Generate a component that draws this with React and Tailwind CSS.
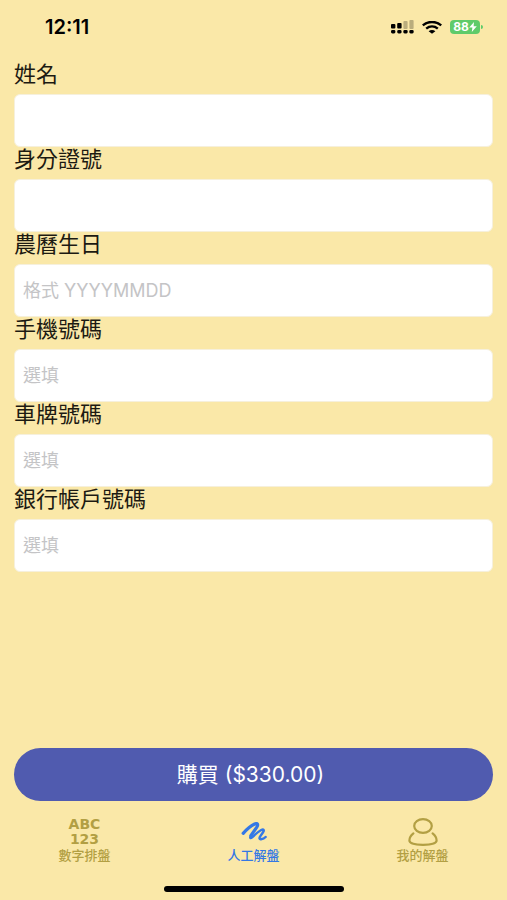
import { useState } from "react";

const FIELDS = [
  { key: "name", label: "姓名", placeholder: "" },
  { key: "idNumber", label: "身分證號", placeholder: "" },
  { key: "birthday", label: "農曆生日", placeholder: "格式 YYYYMMDD" },
  { key: "phone", label: "手機號碼", placeholder: "選填" },
  { key: "plate", label: "車牌號碼", placeholder: "選填" },
  { key: "bank", label: "銀行帳戶號碼", placeholder: "選填" },
];

const TABS = [
  { key: "numbers", label: "數字排盤", icon: NumbersIcon },
  { key: "manual", label: "人工解盤", icon: ScribbleIcon },
  { key: "mine", label: "我的解盤", icon: PersonIcon },
];

function NumbersIcon() {
  return (
    <span className="flex flex-col items-center font-['DejaVu_Sans',sans-serif] text-sm leading-[15px] font-bold">
      <span>ABC</span>
      <span>123</span>
    </span>
  );
}

function ScribbleIcon() {
  return (
    <svg width="26" height="20" viewBox="0 0 26 20" fill="none" stroke="currentColor" strokeLinecap="round" strokeLinejoin="round">
      <path d="M2.2 11.4C5.6 7.4 9.8 3.8 13.6 2C16.4 0.8 17.4 2.4 16 4.8L10 13.4" strokeWidth="3.2" />
      <path d="M10 13.4C8.4 16 9.4 16.8 11.4 15C14 12.6 17.4 9.6 20.2 8C22.6 6.8 23.4 8 22.2 10L19.2 14.4C18 16.4 18.4 17.4 20 17.2C21.8 17 23.4 16.4 24.6 15" strokeWidth="2.4" />
    </svg>
  );
}

function PersonIcon() {
  return (
    <svg width="30" height="28" viewBox="0 0 30 28" fill="none" stroke="currentColor" strokeWidth="2.2" strokeLinecap="round">
      <ellipse cx="15" cy="8" rx="8.8" ry="6.8" />
      <path d="M5.4 15.4C2.8 17.4 1.4 20.2 1.4 22.6C1.4 25.6 5.6 26.8 15 26.8C24.4 26.8 28.6 25.6 28.6 22.6C28.6 20.2 27.2 17.4 24.6 15.4" />
    </svg>
  );
}

function StatusBar() {
  return (
    <header className="flex h-[54px] items-center justify-between pr-6 pl-[45px] text-black">
      <span className="text-xl font-semibold">12:11</span>
      <div className="flex items-center gap-2">
        <svg width="23" height="14" viewBox="0 0 23 14" fill="currentColor">
          <rect x="0" y="4" width="4.4" height="4.6" rx="1" />
          <rect x="6.2" y="3" width="4.4" height="5.6" rx="1" />
          <g opacity="0.25">
            <rect x="12.4" y="1" width="4.2" height="8" rx="1" />
            <rect x="18.4" y="0" width="4.2" height="9" rx="1" />
          </g>
          <rect x="0" y="10" width="4.4" height="3.4" rx="1.4" />
          <rect x="6.2" y="10" width="4.4" height="3.4" rx="1.4" />
          <rect x="12.3" y="10" width="4.4" height="3.4" rx="1.4" />
          <rect x="18.3" y="10" width="4.4" height="3.4" rx="1.4" />
        </svg>
        <svg width="20" height="13" viewBox="0 0 20 13" fill="none" stroke="currentColor" strokeWidth="2.4">
          <path d="M0.8 4.4C6 -0.2 14 -0.2 19.2 4.4" />
          <path d="M4.2 7.6C7.6 4.8 12.4 4.8 15.8 7.6" />
          <path d="M10 12.8L6.6 10.2C8.6 8.6 11.4 8.6 13.4 10.2Z" fill="currentColor" stroke="none" />
        </svg>
        <div className="flex items-center gap-px">
          <span className="flex h-[14px] w-[30px] items-center justify-center rounded bg-[#5fcb6a] text-xs font-bold text-white">
            88
            <svg width="8" height="10" viewBox="0 0 8 10" fill="currentColor">
              <path d="M5 0L0.2 5.6H3.4L2.8 10L7.8 4.2H4.6Z" />
            </svg>
          </span>
          <span className="h-1 w-0.5 rounded-r bg-[#5fcb6a]" />
        </div>
      </div>
    </header>
  );
}

export default function App() {
  const [form, setForm] = useState({});
  const [tab, setTab] = useState("manual");

  function handleChange(key, value) {
    setForm((prev) => ({ ...prev, [key]: value }));
  }

  return (
    <div className="flex min-h-screen flex-col bg-[#fae8a8] font-['Inter','Noto_Sans_CJK_TC',sans-serif]">
      <StatusBar />

      <form
        className="flex flex-1 flex-col px-3.5 pt-2"
        onSubmit={(e) => e.preventDefault()}
      >
        {FIELDS.map((f) => (
          <div key={f.key} className="flex flex-col">
            <label
              htmlFor={f.key}
              className="mb-2 text-[22px] leading-6 text-[#1c1a12]"
            >
              {f.label}
            </label>
            <input
              id={f.key}
              type="text"
              value={form[f.key] || ""}
              placeholder={f.placeholder}
              onChange={(e) => handleChange(f.key, e.target.value)}
              className="h-[53px] w-full rounded-md border border-[#f6f0dc] bg-white px-2 text-lg text-[#1c1a12] outline-none placeholder:text-[#c4c4c6]"
            />
          </div>
        ))}

        <button
          type="submit"
          className="mt-auto h-[53px] w-full rounded-full bg-[#505baf] pr-1.5 text-[21px] text-white"
        >
          購買 ($330.00)
        </button>
      </form>

      {/* Tab bar */}
      <nav className="grid grid-cols-3 pt-4">
        {TABS.map((t) => {
          const Icon = t.icon;
          return (
            <button
              key={t.key}
              type="button"
              onClick={() => setTab(t.key)}
              className={`flex flex-col items-center ${
                tab === t.key ? "text-[#3478e5]" : "text-[#b29f43]"
              }`}
            >
              <span className="flex h-[30px] items-center justify-center">
                <Icon />
              </span>
              <span className="text-[13px] leading-4 font-medium">
                {t.label}
              </span>
            </button>
          );
        })}
      </nav>

      {/* Home indicator */}
      <div className="flex justify-center pt-[23px] pb-2">
        <div className="h-1.5 w-[180px] rounded-full bg-black" />
      </div>
    </div>
  );
}
